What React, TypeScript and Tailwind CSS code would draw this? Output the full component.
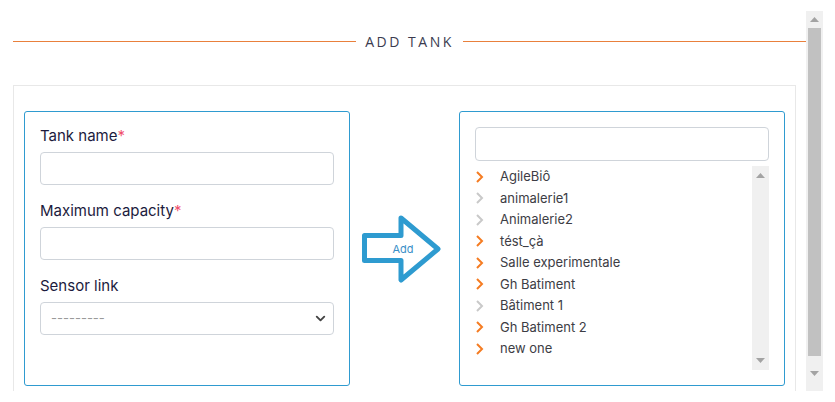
import { ChevronDown } from "lucide-react";

const sites = [
    { name: "AgileBiô", open: true },
    { name: "animalerie1", open: false },
    { name: "Animalerie2", open: false },
    { name: "tést_çà", open: true },
    { name: "Salle experimentale", open: true },
    { name: "Gh Batiment", open: true },
    { name: "Bâtiment 1", open: false },
    { name: "Gh Batiment 2", open: true },
    { name: "new one", open: true },
];

function Field({ label, required, children }: { label: string; required?: boolean; children: React.ReactNode }) {
    return (
        <div className="mb-[15px]">
            <label className="block text-[15px] leading-[22px] text-[#1c1b3d] mb-[5px]">
                {label}
                {required && <span className="text-[#f0506e]">*</span>}
            </label>
            {children}
        </div>
    );
}

function Triangle({ up }: { up?: boolean }) {
    return (
        <svg width="9" height="5" viewBox="0 0 9 5" className="block">
            <path d={up ? "M0 5 L4.5 0 L9 5 Z" : "M0 0 L4.5 5 L9 0 Z"} fill="#a3a3a3" />
        </svg>
    );
}

function Caret({ color }: { color: string }) {
    return (
        <svg width="9" height="12" viewBox="0 0 9 12" className="block shrink-0">
            <path d="M2 1 L7 6 L2 11" fill="none" stroke={color} strokeWidth="2" />
        </svg>
    );
}

export default function App() {
    return (
        <div className="w-[835px] h-[402px] bg-white flex pt-[11px] pb-[11px] pr-[12px] font-['Inter','Liberation_Sans',sans-serif] overflow-hidden">
            <div className="flex-1 overflow-hidden">
                <div className="flex items-center h-[20px] mt-[20px] pl-[13px]">
                    <div className="flex-1 h-px bg-[#e9803c]" />
                    <span className="px-[9px] text-[14px] tracking-[2.5px] text-[#3b3b4f] font-['Open_Sans','Liberation_Sans',sans-serif]">ADD TANK</span>
                    <div className="flex-1 h-px bg-[#e9803c]" />
                </div>

                <div className="ml-[13px] mr-[10px] mt-[34px] border border-[#e8e8e8] pt-[25px] px-[10px] pb-[20px]">
                    <div className="flex">
                        <div className="w-[326px] h-[275px] border border-[#2f9bd0] rounded-[3px] pt-[13px] px-[15px]">
                            <Field label="Tank name" required>
                                <input className="block w-full h-[33px] border border-[#cfd4da] rounded-[4px] outline-none" />
                            </Field>
                            <Field label="Maximum capacity" required>
                                <input className="block w-full h-[33px] border border-[#cfd4da] rounded-[4px] outline-none" />
                            </Field>
                            <Field label="Sensor link">
                                <div className="flex items-center justify-between h-[33px] border border-[#cfd4da] rounded-[4px] pl-[10px] pr-[5px]">
                                    <span className="text-[13px] text-[#9a9a9a]">---------</span>
                                    <ChevronDown size={15} strokeWidth={3} className="text-[#444]" />
                                </div>
                            </Field>
                        </div>

                        <div className="flex-1 flex items-center justify-center">
                            <div className="relative w-[84px] h-[72px] mr-[6px]">
                                <svg width="84" height="72" viewBox="0 0 84 72" className="block">
                                    <path
                                        d="M4.5 22.5 H41 V5 L78 36 L41 67 V47.5 H4.5 Z"
                                        fill="white"
                                        stroke="#2e9bd0"
                                        strokeWidth="5"
                                        strokeLinejoin="round"
                                    />
                                </svg>
                                <span className="absolute left-[33px] top-[29px] text-[11px] leading-[14px] text-[#3a8fc8]">Add</span>
                            </div>
                        </div>

                        <div className="w-[326px] h-[275px] border border-[#2f9bd0] rounded-[3px] pt-[15px] px-[15px]">
                            <input className="block w-full h-[34px] border border-[#cfd4da] rounded-[4px] outline-none" />
                            <div className="flex mt-[5px] h-[204px]">
                                <ul className="flex-1">
                                    {sites.map((s) => (
                                        <li key={s.name} className="flex items-center h-[21.5px]">
                                            <Caret color={s.open ? "#f57c22" : "#c9c9c9"} />
                                            <span className="ml-[16px] text-[13px] text-[#3d3d45]">{s.name}</span>
                                        </li>
                                    ))}
                                </ul>
                                <div className="w-[17px] bg-[#f0f0f0] flex flex-col items-center justify-between py-[7px]">
                                    <Triangle up />
                                    <Triangle />
                                </div>
                            </div>
                        </div>
                    </div>
                </div>
            </div>

            <div className="w-[17px] bg-[#f0f0f0] flex flex-col items-center">
                <div className="h-[17px] flex items-center justify-center">
                    <Triangle up />
                </div>
                <div className="w-[13px] h-[328px] bg-[#c1c1c1]" />
                <div className="flex-1 flex items-center justify-center">
                    <Triangle />
                </div>
            </div>
        </div>
    );
}
